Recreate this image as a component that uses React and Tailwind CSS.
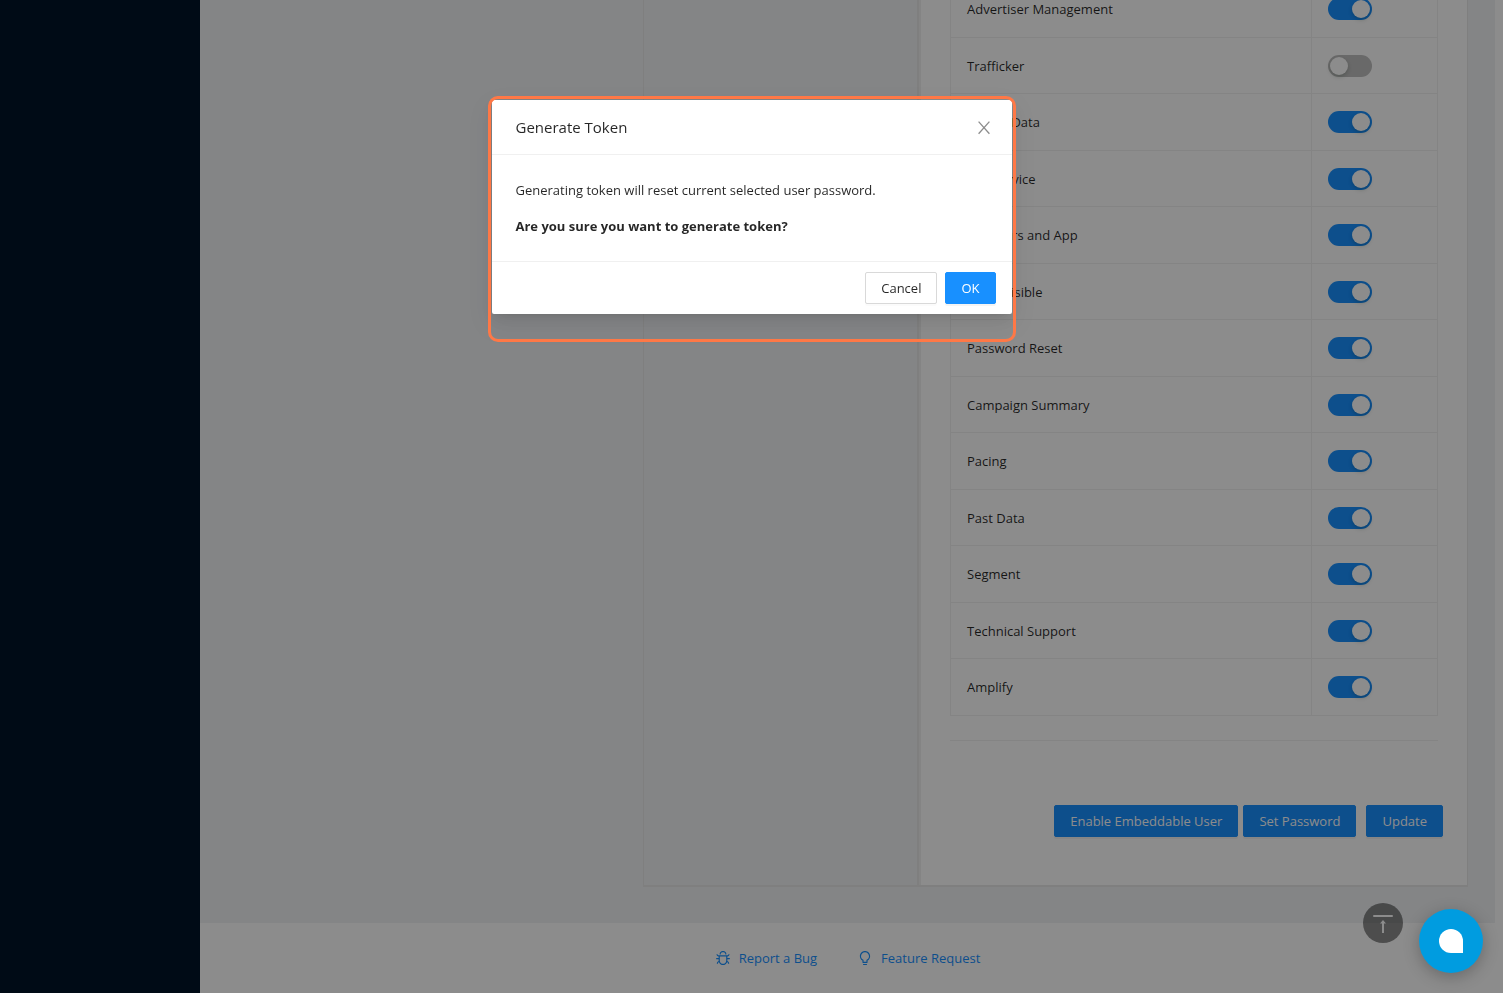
import { AiOutlineBug, AiOutlineBulb } from "react-icons/ai";

const permissions = [
  { name: "Advertiser Management", on: true },
  { name: "Trafficker", on: false },
  { name: "Report Data", on: true },
  { name: "Self Service", on: true },
  { name: "Browsers and App", on: true },
  { name: "Costs Visible", on: true },
  { name: "Password Reset", on: true },
  { name: "Campaign Summary", on: true },
  { name: "Pacing", on: true },
  { name: "Past Data", on: true },
  { name: "Segment", on: true },
  { name: "Technical Support", on: true },
  { name: "Amplify", on: true },
];

const primary =
  "h-8 rounded-[2px] border border-[#1890ff] bg-[#1890ff] px-[15px] text-white shadow-[0_2px_0_rgba(0,0,0,0.045)]";

function Toggle({ id, on }) {
  return (
    <input
      id={id}
      type="checkbox"
      role="switch"
      defaultChecked={on}
      className="block h-[22px] w-11 appearance-none rounded-full bg-[#bfbfbf] p-[2px] before:block before:size-[18px] before:rounded-full before:bg-white before:shadow-[0_2px_4px_rgba(0,35,11,0.2)] before:content-[''] checked:bg-[#1890ff] checked:before:ml-auto"
    />
  );
}

function PermissionTable() {
  return (
    <table className="-mt-5 w-full table-fixed border-collapse">
      <tbody>
        {permissions.map(({ name, on }, i) => (
          <tr key={name} className="h-[57px] even:h-14">
            <td className="border border-[#f0f0f0] px-4">
              <label htmlFor={`perm-${i}`} className="block">
                {name}
              </label>
            </td>
            <td className="w-[126px] border border-[#f0f0f0] px-4">
              <Toggle id={`perm-${i}`} on={on} />
            </td>
          </tr>
        ))}
      </tbody>
    </table>
  );
}

function TokenDialog() {
  return (
    <div className="fixed inset-0 bg-black/45 pt-24">
      <div className="relative mx-auto w-[528px] px-1 pt-1 pb-7">
        <div
          role="dialog"
          aria-modal="true"
          aria-labelledby="token-title"
          className="rounded-[2px] bg-white shadow-[0_3px_6px_-4px_rgba(0,0,0,0.12),0_6px_16px_rgba(0,0,0,0.08),0_9px_28px_8px_rgba(0,0,0,0.05)]"
        >
          <header className="flex items-center justify-between border-b border-[#f0f0f0] py-4 pr-5 pl-6">
            <h2 id="token-title" className="text-[15px] leading-[22px] font-medium">
              Generate Token
            </h2>
            <button aria-label="Close" className="text-black/45">
              <svg
                viewBox="0 0 16 16"
                className="size-4"
                fill="none"
                stroke="currentColor"
                strokeWidth="1.3"
                aria-hidden="true"
              >
                <path d="M2.6 2.6 13.4 14.8M13.4 2.6 2.6 14.8" />
              </svg>
            </button>
          </header>
          <div className="flex flex-col gap-[14px] p-6">
            <p>Generating token will reset current selected user password.</p>
            <p className="font-bold">Are you sure you want to generate token?</p>
          </div>
          <footer className="flex justify-end gap-2 border-t border-[#f0f0f0] px-4 py-[10px]">
            <button className="h-8 rounded-[2px] border border-[#d9d9d9] bg-white px-[15px] shadow-[0_2px_0_rgba(0,0,0,0.016)]">
              Cancel
            </button>
            <button className={primary}>OK</button>
          </footer>
        </div>
        <div className="pointer-events-none absolute inset-0 rounded-[10px] border-[3px] border-[#ff7846]" />
      </div>
    </div>
  );
}

export default function App() {
  return (
    <div className="flex min-h-screen bg-white font-['Open_Sans',sans-serif] text-[13px] leading-[22px] text-black/85">
      <aside className="w-[200px] shrink-0 bg-[#001529]" />
      <div className="flex min-w-0 flex-1 flex-col pr-2">
        <main className="grid grid-cols-[443fr_825fr] bg-[#f0f2f5] pr-[27px] pb-9">
          <div />
          <section className="grid grid-cols-[275fr_548fr] overflow-hidden border-x border-b-2 border-[#e8e8e8]">
            <div className="border-r-2 border-[#e8e8e8]" />
            <div className="border-l-2 border-[#f0f0f0] bg-white px-[29px]">
              <PermissionTable />
              <hr className="mt-6 border-[#f0f0f0]" />
              <div className="-mr-[5px] flex justify-end gap-[10px] pt-16 pb-12">
                <div className="flex gap-[5px]">
                  <button className={primary}>Enable Embeddable User</button>
                  <button className={primary}>Set Password</button>
                </div>
                <button className={primary}>Update</button>
              </div>
            </div>
          </section>
        </main>
        <footer className="flex items-center justify-center gap-10 py-6 text-[#1890ff]">
          <a href="#bug" className="flex items-center gap-2">
            <AiOutlineBug className="size-4" />
            Report a Bug
          </a>
          <a href="#feature" className="flex items-center gap-2">
            <AiOutlineBulb className="size-4" />
            Feature Request
          </a>
        </footer>
      </div>

      <button
        aria-label="Back to top"
        className="fixed right-[100px] bottom-[50px] grid size-10 place-items-center rounded-full bg-black/45 text-white"
      >
        <svg viewBox="0 0 20 20" className="size-5" fill="currentColor" aria-hidden="true">
          <rect x="0" y="2" width="20" height="2" rx="1" />
          <path d="M10 7 13 10.6H11V20H9V10.6H7Z" />
        </svg>
      </button>

      <TokenDialog />

      <button
        aria-label="Open chat"
        className="fixed right-5 bottom-5 grid size-16 place-items-center rounded-full bg-[#009ce0] shadow-[0_4px_16px_rgba(0,0,0,0.25)]"
      >
        <span className="size-6 rounded-full rounded-br-none bg-white" />
      </button>
    </div>
  );
}
